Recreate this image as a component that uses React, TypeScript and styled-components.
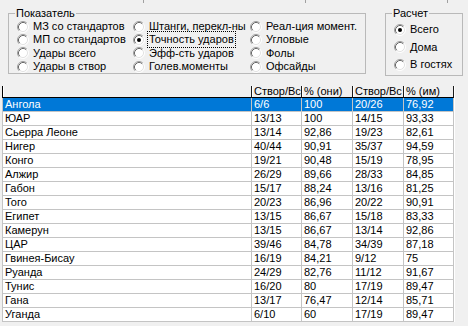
import React from "react";
import styled, { createGlobalStyle } from "styled-components";

const Global = createGlobalStyle`
  html, body { margin: 0; padding: 0; background: #f0f0f0; }
  body {
    font-family: "Liberation Sans", Arial, sans-serif;
    font-size: 11px;
    color: #000;
    overflow: hidden;
  }
`;

const Page = styled.div`
  width: 468px;
  height: 326px;
  overflow: hidden;
  background: #f0f0f0;
`;

const TopStrip = styled.div`
  position: relative;
  height: 3px;
`;

const StripTick = styled.div<{ $x: number }>`
  position: absolute;
  top: 0;
  left: ${(p) => p.$x}px;
  width: 1px;
  height: 3px;
  background: #a0a0a0;
`;

const Groups = styled.div`
  display: flex;
  align-items: flex-start;
  height: 83px;
  padding-left: 8px;
  gap: 19px;
`;

const Group = styled.fieldset<{ $w: number; $pb: number }>`
  margin: 4px 0 0 0;
  width: ${(p) => p.$w}px;
  box-sizing: border-box;
  border: 1px solid #b9b9b9;
  padding: 0 0 ${(p) => p.$pb}px 8px;
  min-width: 0;
`;

const Legend = styled.legend`
  margin-left: -2px;
  padding: 0 1px;
  line-height: 13px;
  height: 13px;
  font-size: 11px;
`;

const RadioGrid = styled.div`
  display: grid;
  grid-template-columns: 116px 117px auto;
  grid-auto-flow: column;
  grid-template-rows: repeat(4, 13.33px);
`;

const RadioCol = styled.div`
  display: grid;
  grid-template-rows: 17px 18px 17px;
  padding-top: 1px;
`;

const RadioItem = styled.div`
  display: flex;
  align-items: center;
  gap: 4px;
  white-space: nowrap;
  line-height: 13px;
`;

const RadioLabel = styled.span<{ $focused?: boolean }>`
  line-height: 13px;
  outline: ${(p) => (p.$focused ? "1px dotted #000" : "none")};
  outline-offset: 1px;
`;

const Table = styled.div`
  margin-left: 2px;
  width: 452px;
  display: grid;
  grid-template-columns: 249px 50px 51px 51px 50px;
  background: #fff;
  border-left: 1px solid #c4c4c4;
`;

const HeadCell = styled.div`
  box-sizing: border-box;
  height: 12px;
  line-height: 11px;
  padding-left: 2px;
  background: #f0f0f0;
  border-right: 1px solid #1a1a1a;
  border-bottom: 1px solid #000;
  box-shadow: inset 1px 0 #fff;
  white-space: nowrap;
  overflow: hidden;
`;

const FirstHead = styled(HeadCell)`
  margin-left: -1px;
  border-left: 1px solid #000;
  width: 250px;
`;

const Cell = styled.div<{ $sel?: boolean }>`
  box-sizing: border-box;
  height: 14px;
  line-height: 13px;
  padding-left: 2px;
  border-right: 1px solid #c4c4c4;
  border-bottom: 1px solid #c4c4c4;
  background: ${(p) => (p.$sel ? "#0078d7" : "#fff")};
  color: ${(p) => (p.$sel ? "#fff" : "#000")};
  white-space: nowrap;
  overflow: hidden;
`;

const Radio = ({ checked }: { checked?: boolean }) => (
  <svg width="12" height="12" viewBox="0 0 12 12" style={{ flex: "none" }}>
    <circle cx="6" cy="6" r="5" fill="#fff" />
    <path d="M2.11 9.89 A5.5 5.5 0 0 1 9.89 2.11" fill="none" stroke="#a0a0a0" strokeWidth="1" />
    <path d="M9.89 2.11 A5.5 5.5 0 0 1 2.11 9.89" fill="none" stroke="#ffffff" strokeWidth="1" />
    <path d="M2.82 9.18 A4.5 4.5 0 0 1 9.18 2.82" fill="none" stroke="#696969" strokeWidth="1" />
    <path d="M9.18 2.82 A4.5 4.5 0 0 1 2.82 9.18" fill="none" stroke="#e3e3e3" strokeWidth="1" />
    {checked && <circle cx="6" cy="6" r="2" fill="#000" />}
  </svg>
);

const indicators = [
  "МЗ со стандартов",
  "МП со стандартов",
  "Удары всего",
  "Удары в створ",
  "Штанги, перекл-ны",
  "Точность ударов",
  "Эфф-сть ударов",
  "Голев.моменты",
  "Реал-ция момент.",
  "Угловые",
  "Фолы",
  "Офсайды",
];

const calc = ["Всего", "Дома", "В гостях"];

const rows: [string, string, string, string, string][] = [
  ["Ангола", "6/6", "100", "20/26", "76,92"],
  ["ЮАР", "13/13", "100", "14/15", "93,33"],
  ["Сьерра Леоне", "13/14", "92,86", "19/23", "82,61"],
  ["Нигер", "40/44", "90,91", "35/37", "94,59"],
  ["Конго", "19/21", "90,48", "15/19", "78,95"],
  ["Алжир", "26/29", "89,66", "28/33", "84,85"],
  ["Габон", "15/17", "88,24", "13/16", "81,25"],
  ["Того", "20/23", "86,96", "20/22", "90,91"],
  ["Египет", "13/15", "86,67", "15/18", "83,33"],
  ["Камерун", "13/15", "86,67", "13/14", "92,86"],
  ["ЦАР", "39/46", "84,78", "34/39", "87,18"],
  ["Гвинея-Бисау", "16/19", "84,21", "9/12", "75"],
  ["Руанда", "24/29", "82,76", "11/12", "91,67"],
  ["Тунис", "16/20", "80", "17/19", "89,47"],
  ["Гана", "13/17", "76,47", "12/14", "85,71"],
  ["Уганда", "6/10", "60", "17/19", "89,47"],
];

const headers = ["Створ/Вс", "% (они)", "Створ/Вс", "% (им)"];

export default function App() {
  return (
    <Page>
      <Global />
      <TopStrip>
        <StripTick $x={143} />
        <StripTick $x={305} />
        <StripTick $x={447} />
      </TopStrip>
      <Groups>
        <Group $w={358} $pb={0}>
          <Legend>Показатель</Legend>
          <RadioGrid>
            {indicators.map((t) => (
              <RadioItem key={t}>
                <Radio checked={t === "Точность ударов"} />
                <RadioLabel $focused={t === "Точность ударов"}>{t}</RadioLabel>
              </RadioItem>
            ))}
          </RadioGrid>
        </Group>
        <Group $w={78} $pb={2}>
          <Legend>Расчет</Legend>
          <RadioCol>
            {calc.map((t) => (
              <RadioItem key={t}>
                <Radio checked={t === "Всего"} />
                <RadioLabel>{t}</RadioLabel>
              </RadioItem>
            ))}
          </RadioCol>
        </Group>
      </Groups>
      <Table>
        <FirstHead />
        {headers.map((h, i) => (
          <HeadCell key={i}>{h}</HeadCell>
        ))}
        {rows.map((r, ri) =>
          r.map((c, ci) => (
            <Cell key={`${ri}-${ci}`} $sel={ri === 0}>
              {c}
            </Cell>
          ))
        )}
      </Table>
    </Page>
  );
}
